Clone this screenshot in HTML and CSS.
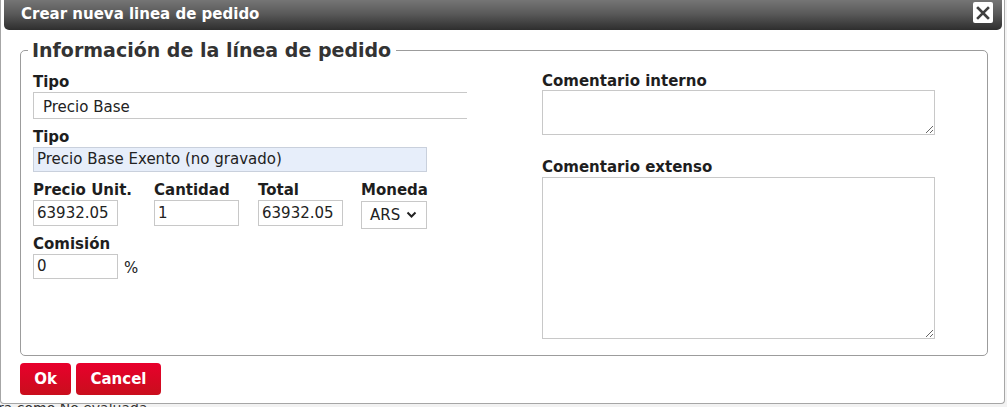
FILE: index.html
```html
<!DOCTYPE html>
<html lang="es">
<head>
<meta charset="utf-8">
<title>Crear nueva linea de pedido</title>
<link rel="stylesheet" href="styles.css">
</head>
<body>
<div class="page">
  <div class="page-text">ra como No evaluada</div>
</div>
<div class="dialog">
  <div class="titlebar">
    <span class="title">Crear nueva linea de pedido</span>
    <span class="close"><svg width="14" height="14" viewBox="0 0 14 14"><path d="M2 2L12 12M12 2L2 12" stroke="#404040" stroke-width="2.6" stroke-linecap="square"/></svg></span>
  </div>
  <fieldset class="box">
    <legend>Información de la línea de pedido</legend>
    <div class="cols">
      <div class="left">
        <label class="lbl">Tipo</label>
        <div class="field tipo1">Precio Base</div>
        <label class="lbl sp">Tipo</label>
        <div class="field tipo2">Precio Base Exento (no gravado)</div>
        <div class="row">
          <div class="cell c1">
            <label class="lbl">Precio Unit.</label>
            <div class="field num">63932.05</div>
          </div>
          <div class="cell c2">
            <label class="lbl">Cantidad</label>
            <div class="field num">1</div>
          </div>
          <div class="cell c3">
            <label class="lbl">Total</label>
            <div class="field num">63932.05</div>
          </div>
          <div class="cell c4">
            <label class="lbl">Moneda</label>
            <div class="sel">ARS <svg width="11" height="8" viewBox="0 0 11 8"><path d="M1.5 1.5L5.5 5.5L9.5 1.5" fill="none" stroke="#222" stroke-width="2"/></svg></div>
          </div>
        </div>
        <label class="lbl sp2">Comisión</label>
        <div class="comrow">
          <div class="field num">0</div>
          <span class="pct">%</span>
        </div>
      </div>
      <div class="right">
        <label class="lbl">Comentario interno</label>
        <textarea class="ta ta1"></textarea>
        <label class="lbl sp3">Comentario extenso</label>
        <textarea class="ta ta2"></textarea>
      </div>
    </div>
  </fieldset>
  <div class="buttons">
    <button class="btn ok">Ok</button>
    <button class="btn cancel">Cancel</button>
  </div>
</div>
</body>
</html>
```
FILE: styles.css
```css
html, body {
  margin: 0;
  padding: 0;
}
body {
  background: #f2f2f2;
  font-family: "DejaVu Sans", Verdana, sans-serif;
  width: 1007px;
  height: 407px;
  overflow: hidden;
  position: relative;
}
.page {
  padding-top: 400px;
}
.page-text {
  font-size: 14px;
  line-height: 16px;
  color: #333;
  margin-left: -2px;
}
.dialog {
  position: absolute;
  left: 0;
  top: 0;
  width: 1003px;
  height: 403px;
  background: #fff;
  border: 1px solid #a6a6a6;
  border-top: none;
  border-radius: 0 0 4px 4px;
}
.titlebar {
  height: 30px;
  margin: 0 2px 0 3px;
  background: linear-gradient(#757575, #5a5a5a 45%, #3a3a3a 85%, #2e2e2e);
  border-radius: 0 0 5px 5px;
  display: flex;
  align-items: center;
  justify-content: space-between;
}
.title {
  color: #fff;
  font-weight: bold;
  font-size: 15px;
  margin-left: 17px;
  margin-top: -2px;
}
.close {
  width: 20px;
  height: 21px;
  background: #fff;
  border-radius: 2px;
  margin-right: 9px;
  margin-top: -5px;
  display: flex;
  align-items: center;
  justify-content: center;
}
.box {
  margin: 9px 0 0 19px;
  width: 941px;
  padding: 11px 13px 0 12px;
  height: 304px;
  border: 1px solid #9c9c9c;
  border-radius: 5px;
  box-sizing: content-box;
}
legend {
  font-size: 19px;
  line-height: 23px;
  font-weight: bold;
  color: #333;
  padding: 0 5px 0 4px;
  margin-left: -5px;
}
.cols {
  display: flex;
  gap: 75px;
}
.left {
  width: 434px;
  display: flex;
  flex-direction: column;
  align-items: flex-start;
}
.right {
  width: 393px;
  display: flex;
  flex-direction: column;
}
.lbl {
  display: block;
  font-size: 15px;
  line-height: 18px;
  font-weight: bold;
  color: #1e1e1e;
  margin-bottom: 1px;
}
.sp { margin-top: 9px; }
.sp2 { margin-top: 6px; }
.field {
  box-sizing: border-box;
  border: 1px solid #c8c8c8;
  font-size: 15px;
  color: #222;
  background: #fff;
}
.tipo1 {
  width: 434px;
  height: 27px;
  line-height: 22px;
  padding: 3px 0 0 9px;
  border-right: none;
}
.tipo2 {
  width: 394px;
  height: 25px;
  line-height: 23px;
  padding-left: 3px;
  background: #e7eefa;
  border-color: #c9d0dc;
}
.row {
  display: flex;
  margin-top: 9px;
}
.cell {
  display: flex;
  flex-direction: column;
  align-items: flex-start;
}
.c1 { width: 121px; }
.c2 { width: 104px; }
.c3 { width: 103px; }
.num {
  width: 85px;
  height: 26px;
  line-height: 24px;
  padding-left: 3px;
}
.sel {
  box-sizing: border-box;
  width: 66px;
  height: 28px;
  margin-top: 1px;
  border: 1px solid #c8c8c8;
  font-size: 15px;
  color: #222;
  display: flex;
  align-items: center;
  gap: 6px;
  padding-left: 8px;
}
.comrow {
  display: flex;
  align-items: center;
}
.comrow .num { height: 25px; line-height: 23px; }
.pct {
  font-size: 15px;
  color: #222;
  margin-left: 6px;
  margin-top: 3px;
}
.ta {
  box-sizing: border-box;
  width: 393px;
  border: 1px solid #c8c8c8;
  margin: 0;
  padding: 2px;
  font-family: inherit;
  display: block;
}
.right .lbl { margin-bottom: 0; line-height: 17px; }
.ta1 { height: 45px; }
.sp3 { margin-top: 24px; }
.ta2 { height: 162px; margin-top: 1px; }
.buttons {
  display: flex;
  gap: 5px;
  margin: 7px 0 0 19px;
}
.btn {
  height: 32px;
  border: none;
  border-radius: 4px;
  background: linear-gradient(#e8002c, #c90e1c);
  color: #fff;
  font-family: "DejaVu Sans", Verdana, sans-serif;
  font-weight: bold;
  font-size: 15px;
  padding: 0;
}
.ok { width: 51px; }
.cancel { width: 85px; }
```
